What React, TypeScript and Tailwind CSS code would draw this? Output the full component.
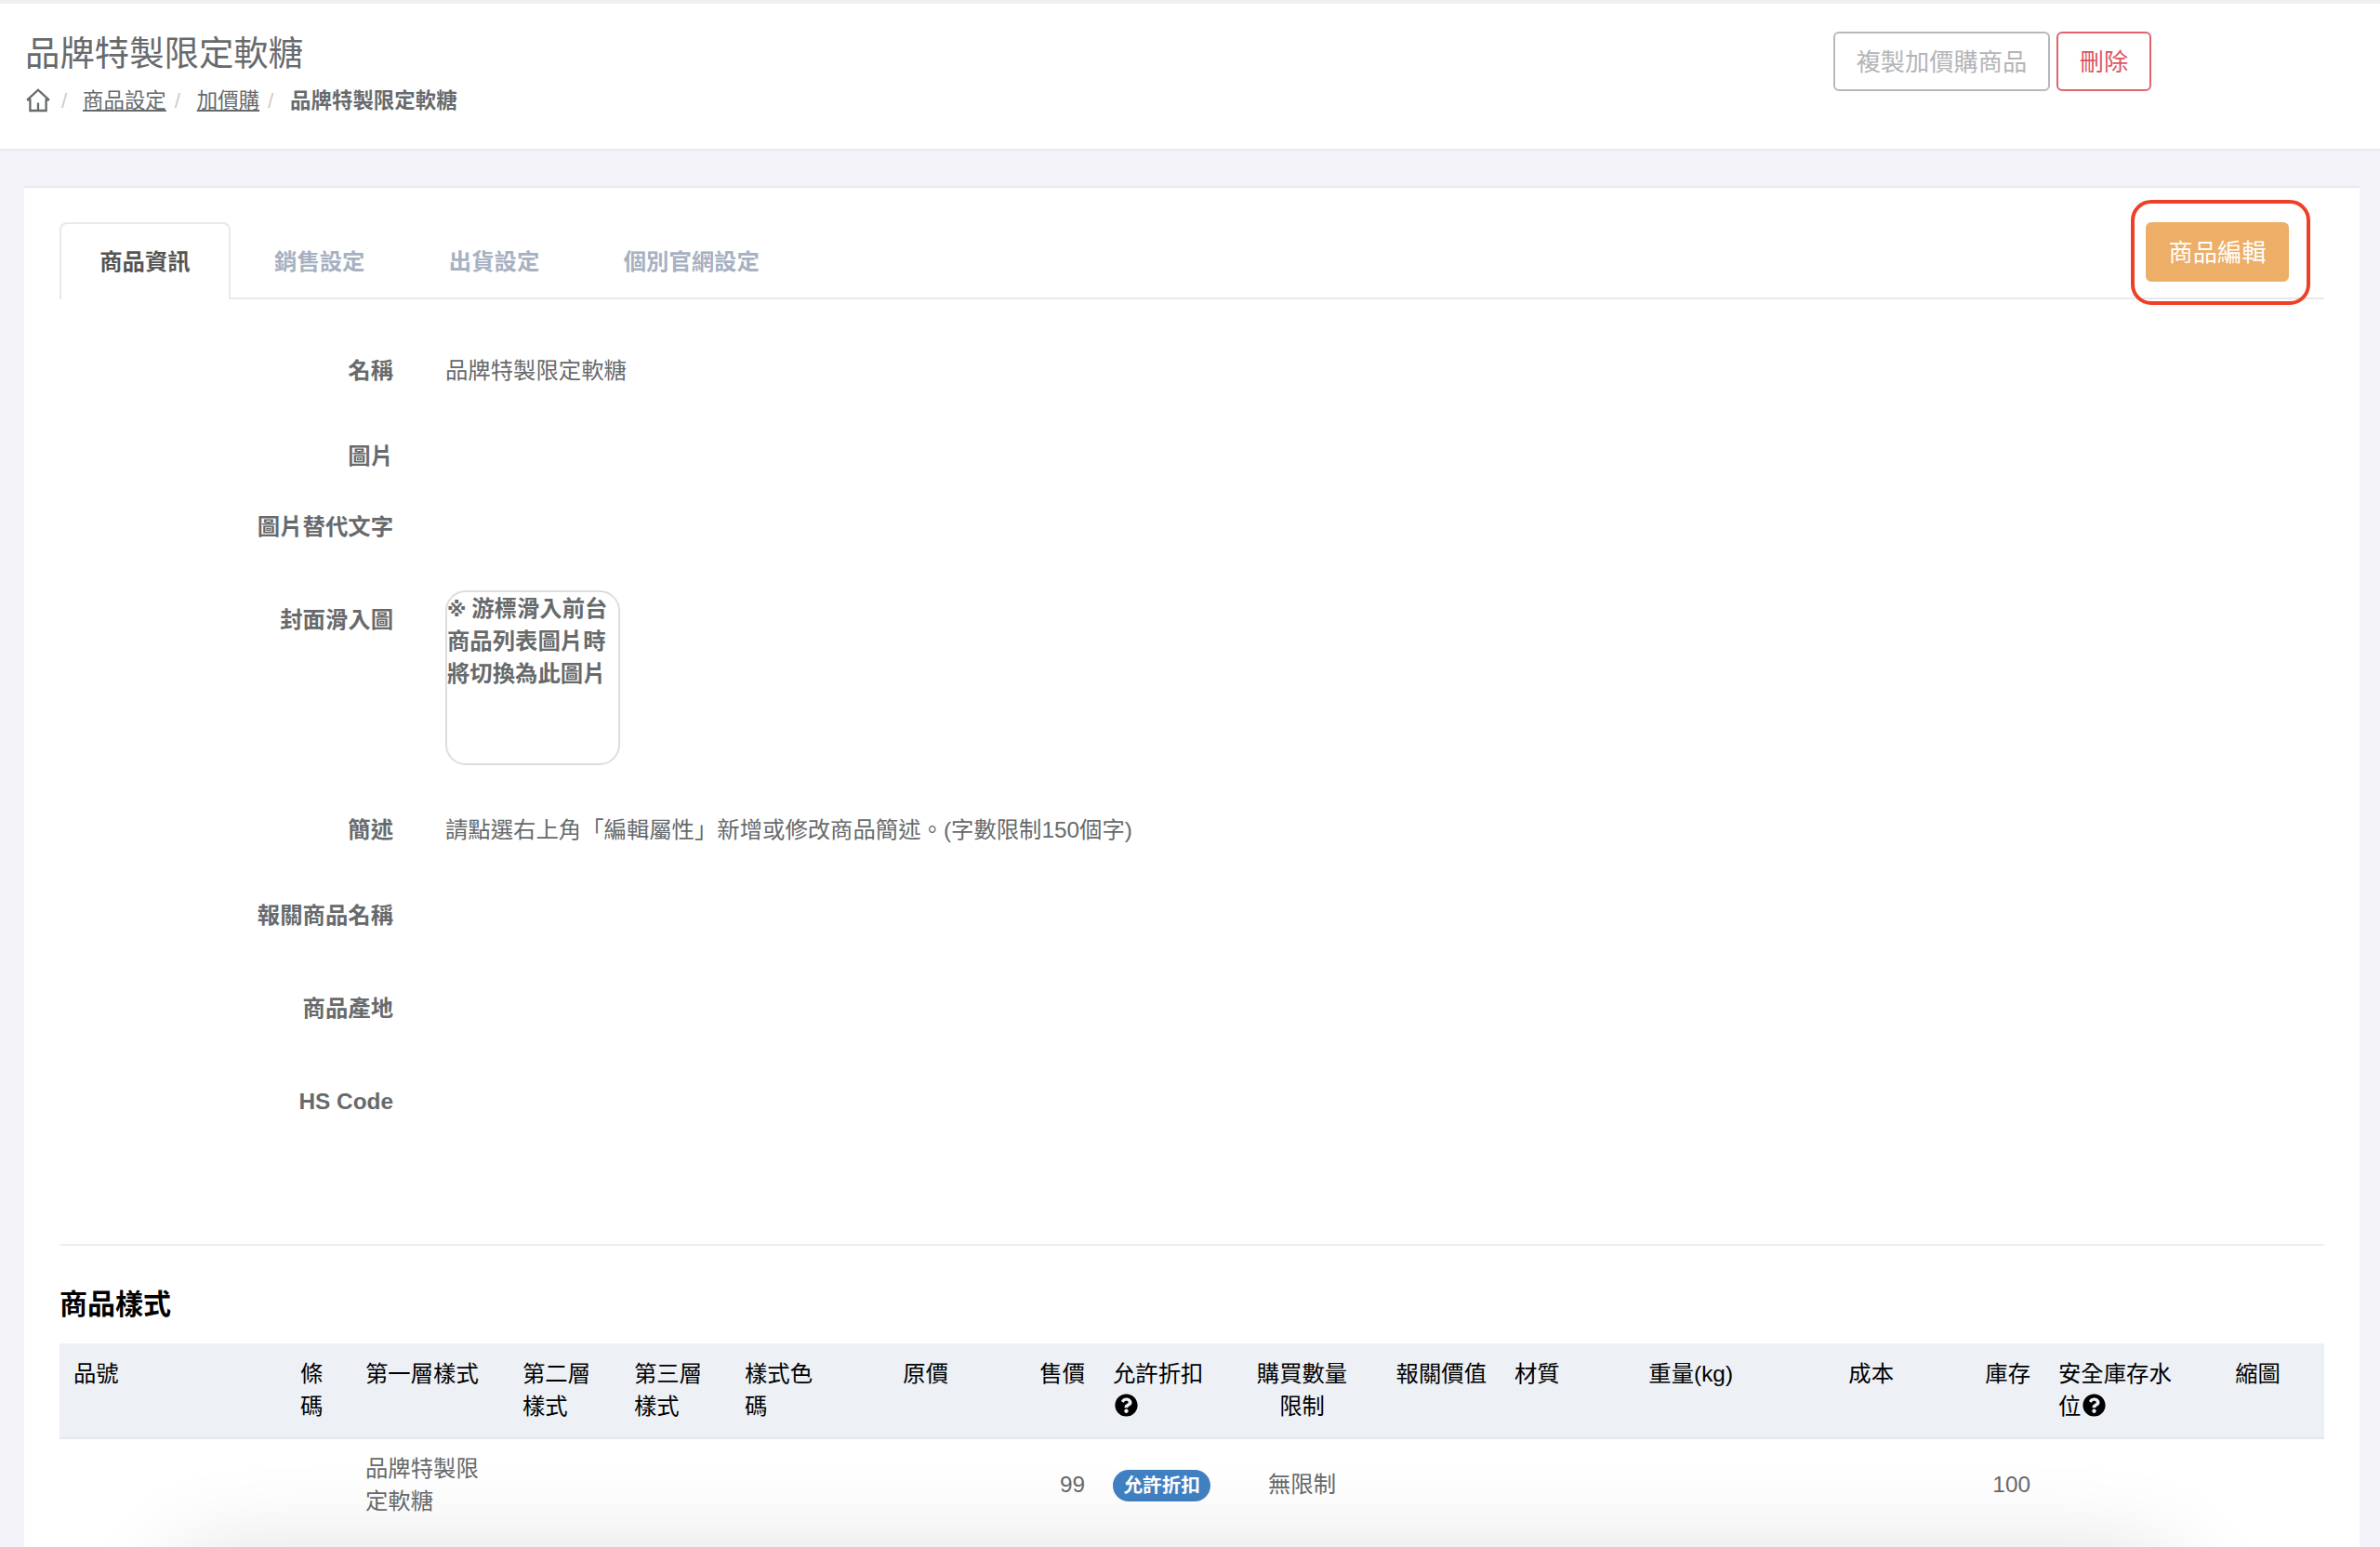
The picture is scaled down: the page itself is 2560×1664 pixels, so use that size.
import { Fragment } from 'react'
import { FaQuestionCircle } from 'react-icons/fa'
import clsx from 'clsx'

const CRUMBS = ['商品設定', '加價購']

const TABS = ['商品資訊', '銷售設定', '出貨設定', '個別官網設定']

const COLUMNS = [
  { label: '品號', width: 244 },
  { label: '條碼', width: 70 },
  { label: '第一層樣式', width: 169 },
  { label: '第二層樣式', width: 120 },
  { label: '第三層樣式', width: 119 },
  { label: '樣式色碼', width: 120 },
  { label: '原價', width: 129, align: 'text-right' },
  { label: '售價', width: 147, align: 'text-right' },
  { label: '允許折扣', width: 133, help: true },
  { label: '購買數量\n限制', width: 171, align: 'text-center' },
  { label: '報關價值', width: 128, align: 'text-right' },
  { label: '材質', width: 125 },
  { label: '重量(kg)', width: 140, align: 'text-right' },
  { label: '成本', width: 173, align: 'text-right' },
  { label: '庫存', width: 147, align: 'text-right' },
  { label: '安全庫存水位', width: 158, help: true },
  { label: '縮圖', width: 143, align: 'text-center' },
]

const ROW: Record<string, React.ReactNode> = {
  第一層樣式: '品牌特製限定軟糖',
  售價: '99',
  允許折扣: (
    <span className="inline-flex h-[34px] items-center rounded-full bg-[#4181c2] px-[11.5px] text-[20.6px] leading-none font-bold whitespace-nowrap text-white">
      允許折扣
    </span>
  ),
  '購買數量\n限制': '無限制',
  庫存: '100',
}

function HomeIcon() {
  return (
    <svg
      className="mb-[3px] ml-[1px]"
      width="26"
      height="26"
      viewBox="0 0 26 26"
      fill="none"
      stroke="#676a6c"
      strokeWidth="2.3"
      strokeLinejoin="miter"
    >
      <path d="M1 12.4h3.4V24h17.2V12.4H25M1.2 12.6 13 1.7l11.8 10.9M13 24v-8.6" />
    </svg>
  )
}

function Field({ label, className, children }: { label: string; className: string; children?: React.ReactNode }) {
  return (
    <div className={clsx('flex', className)}>
      <div className="w-[359px] shrink-0 text-right font-bold">{label}</div>
      <div className="ml-[56px]">{children}</div>
    </div>
  )
}

export default function App() {
  return (
    <div
      lang="zh-Hant"
      className="relative h-[1664px] w-[2560px] overflow-hidden bg-[#f3f3f9] font-['Liberation_Sans','Noto_Sans_CJK_TC',sans-serif] text-[24.375px] leading-[34.8px] text-[#676a6c]"
    >
      {/* Page heading */}
      <header className="flex h-[162px] justify-between border-t-4 border-b-2 border-t-[#efefef] border-b-[#e7eaec] bg-white pl-[27px]">
        <div className="pt-[33px]">
          <h1 className="text-[37.4px] leading-[42px]">品牌特製限定軟糖</h1>
          <nav className="mt-[14px] flex items-center text-[22.45px] leading-[32px]">
            <HomeIcon />
            {CRUMBS.map((crumb, i) => (
              <Fragment key={crumb}>
                <span className={clsx('text-[#ccc]', i === 0 ? 'w-[35px] pl-[12px]' : 'w-[33px] pl-[9px]')}>/</span>
                <a className="underline underline-offset-2">{crumb}</a>
              </Fragment>
            ))}
            <span className="w-[33px] pl-[9px] text-[#ccc]">/</span>
            <strong>品牌特製限定軟糖</strong>
          </nav>
        </div>
        <div className="mt-[30px] mr-[246px] flex h-[64px] gap-[7px] text-[26.25px]">
          <button className="w-[233px] rounded-[6px] border-2 border-[#b7b8bb] pt-[2px] text-[#b4b5b8]">複製加價購商品</button>
          <button className="w-[102px] rounded-[6px] border-2 border-[#e0636d] pt-[2px] text-[#dd5562]">刪除</button>
        </div>
      </header>

      <main className="mx-[26px] mt-[38px] mr-[22px] h-[1464px] border-t-2 border-[#e7eaec] bg-white px-[38px] pt-[37px]">
        {/* Tabs */}
        <div className="relative flex h-[83px] gap-[4px] border-b-2 border-[#e7e9eb] font-bold">
          {TABS.map((tab, i) => (
            <div
              key={tab}
              className={clsx(
                'h-[83px] rounded-t-[8px] border-2 border-b-0 px-[41.2px] pt-[24px]',
                i === 0 ? 'border-[#e7e9eb] bg-white text-[#555]' : 'border-transparent text-[#a7b1c2]'
              )}
            >
              {tab}
            </div>
          ))}
          <div className="absolute -top-[24px] right-[15.5px] h-[113px] w-[193px] rounded-[22px] border-4 border-[#ee4026] pt-[20px] pl-[12.5px]">
            <button className="h-[64px] w-[154px] rounded-[6px] bg-[#edae67] pt-[2px] text-[26.25px] font-normal text-white">
              商品編輯
            </button>
          </div>
        </div>

        {/* Product info */}
        <section className="h-[1018px] border-b-2 border-[#eee] pt-[60px]">
          <Field label="名稱" className="h-[92px]">品牌特製限定軟糖</Field>
          <Field label="圖片" className="h-[76px]" />
          <Field label="圖片替代文字" className="h-[100px]" />
          <Field label="封面滑入圖" className="h-[226px]">
            <div className="-mt-[15px] h-[188px] w-[188px] rounded-[22px] border-2 border-[#ddd] pt-[1px] font-bold">
              <span className="mr-[-1px] font-['DejaVu_Sans'] text-[21px] leading-none">※</span>{' '}
              游標滑入前台商品列表圖片時將切換為此圖片
            </div>
          </Field>
          <Field label="簡述" className="h-[92px]">
            請點選右上角「編輯屬性」新增或修改商品簡述。(字數限制150個字)
          </Field>
          <Field label="報關商品名稱" className="h-[100px]" />
          <Field label="商品產地" className="h-[100px]" />
          <Field label="HS Code" className="h-[100px]" />
        </section>

        {/* Product styles */}
        <h2 className="pt-[41px] pb-[21px] text-[30px] leading-[43px] font-bold text-black">商品樣式</h2>
        <table className="w-[2436px] table-fixed border-collapse">
          <colgroup>
            {COLUMNS.map(({ label, width }) => (
              <col key={label} style={{ width }} />
            ))}
          </colgroup>
          <thead>
            <tr className="h-[102px] border-b-2 border-[#e7e8ea] bg-[#edf0f5] text-black">
              {COLUMNS.map(({ label, align, help }) => (
                <th key={label} className={clsx('px-[15px] pt-[16px] align-top font-normal whitespace-pre-wrap', align ?? 'text-left')}>
                  {label}
                  {help && <FaQuestionCircle size={25} className="ml-[2px] inline align-[-3px]" />}
                </th>
              ))}
            </tr>
          </thead>
          <tbody>
            <tr>
              {COLUMNS.map(({ label, align }) => (
                <td key={label} className={clsx('p-[15px]', align, label === '允許折扣' && 'pr-0')}>
                  {ROW[label]}
                </td>
              ))}
            </tr>
          </tbody>
        </table>
      </main>

      {/* Soft shadow cast by the bar under the fold */}
      <div className="pointer-events-none absolute top-[1674px] left-[180px] h-[160px] w-[2170px] rounded-[60px] shadow-[0_0_105px_rgba(0,0,0,0.14)]" />
    </div>
  )
}
